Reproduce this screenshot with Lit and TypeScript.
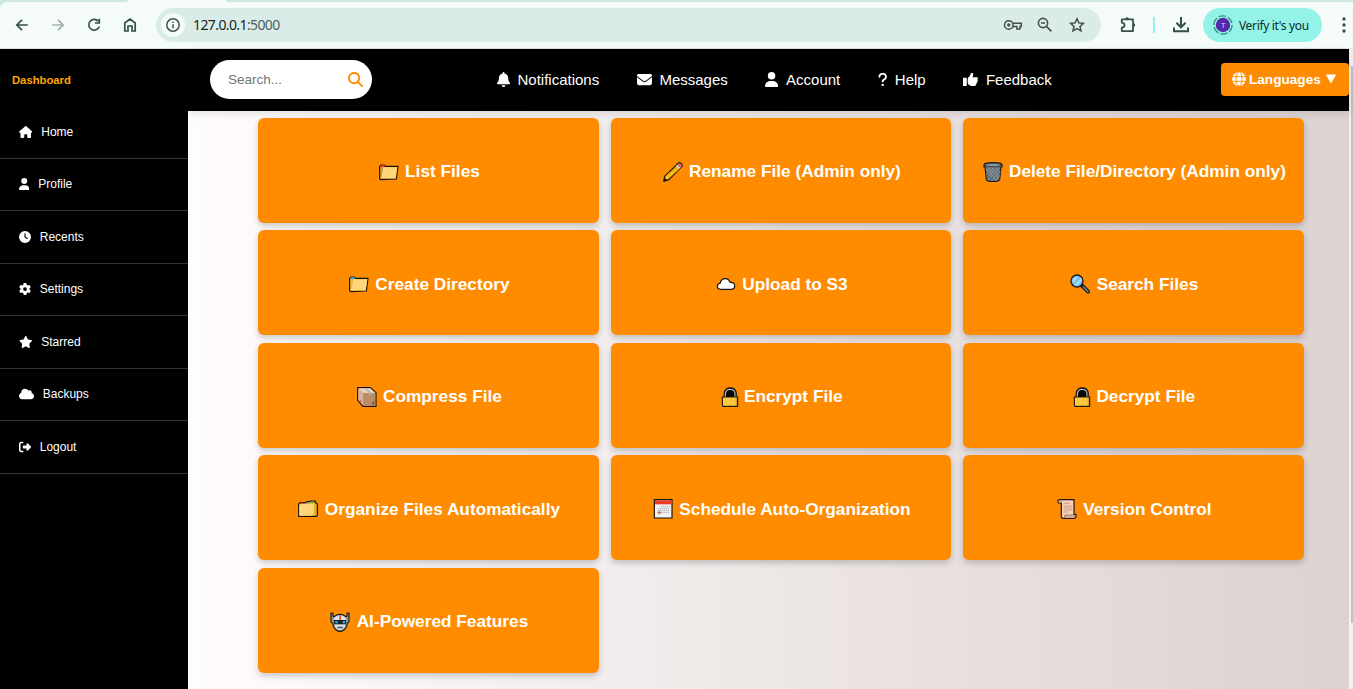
import { LitElement, html, svg, css, TemplateResult, SVGTemplateResult } from "lit";
import { customElement, property } from "lit/decorators.js";

interface Glyph {
  w: number;
  d: string;
}

const GLYPHS: Record<string, Glyph> = {
  home: { w: 576, d: "M575.8 255.5c0 18-15 32.1-32 32.1h-32l.7 160.2c0 2.7-.2 5.4-.5 8.1V472c0 22.1-17.9 40-40 40H456c-1.1 0-2.2 0-3.3-.1c-1.4 .1-2.8 .1-4.2 .1H416 392c-22.1 0-40-17.9-40-40V448 384c0-17.7-14.3-32-32-32H256c-17.7 0-32 14.3-32 32v64 24c0 22.1-17.9 40-40 40H160 128.1c-1.5 0-3-.1-4.5-.2c-1.2 .1-2.4 .2-3.6 .2H104c-22.1 0-40-17.9-40-40V360c0-.9 0-1.9 .1-2.8V287.6H32c-18 0-32-14-32-32.1c0-9 3-17 10-24L266.4 8c7-7 15-8 22-8s15 2 21 7L564.8 231.5c8 7 12 15 11 24z" },
  user: { w: 448, d: "M224 256A128 128 0 1 0 224 0a128 128 0 1 0 0 256zm-45.7 48C79.8 304 0 383.8 0 482.3C0 498.7 13.3 512 29.7 512H418.3c16.4 0 29.7-13.3 29.7-29.7C448 383.8 368.2 304 269.7 304H178.3z" },
  clock: { w: 512, d: "M256 0a256 256 0 1 1 0 512A256 256 0 1 1 256 0zM232 120V256c0 8 4 15.5 10.7 20l96 64c11 7.4 25.9 4.4 33.3-6.7s4.4-25.9-6.7-33.3L280 243.2V120c0-13.3-10.7-24-24-24s-24 10.7-24 24z" },
  gear: { w: 512, d: "M495.9 166.6c3.2 8.7 .5 18.4-6.4 24.6l-43.3 39.4c1.1 8.3 1.7 16.8 1.7 25.4s-.6 17.1-1.7 25.4l43.3 39.4c6.9 6.2 9.6 15.9 6.4 24.6c-4.4 11.9-9.7 23.3-15.8 34.3l-4.7 8.1c-6.6 11-14 21.4-22.1 31.2c-5.9 7.2-15.7 9.6-24.5 6.8l-55.7-17.7c-13.4 10.3-28.2 18.9-44 25.4l-12.5 57.1c-2 9.1-9 16.3-18.2 17.8c-13.8 2.3-28 3.5-42.5 3.5s-28.7-1.2-42.5-3.5c-9.2-1.5-16.2-8.7-18.2-17.8l-12.5-57.1c-15.8-6.5-30.6-15.1-44-25.4L83.1 425.9c-8.8 2.8-18.6 .3-24.5-6.8c-8.1-9.8-15.5-20.2-22.1-31.2l-4.7-8.1c-6.1-11-11.4-22.4-15.8-34.3c-3.2-8.7-.5-18.4 6.4-24.6l43.3-39.4C64.6 273.1 64 264.6 64 256s.6-17.1 1.7-25.4L22.4 191.2c-6.9-6.2-9.6-15.9-6.4-24.6c4.4-11.9 9.7-23.3 15.8-34.3l4.7-8.1c6.6-11 14-21.4 22.1-31.2c5.9-7.2 15.7-9.6 24.5-6.8l55.7 17.7c13.4-10.3 28.2-18.9 44-25.4l12.5-57.1c2-9.1 9-16.3 18.2-17.8C227.3 1.2 241.5 0 256 0s28.7 1.2 42.5 3.5c9.2 1.5 16.2 8.7 18.2 17.8l12.5 57.1c15.8 6.5 30.6 15.1 44 25.4l55.7-17.7c8.8-2.8 18.6-.3 24.5 6.8c8.1 9.8 15.5 20.2 22.1 31.2l4.7 8.1c6.1 11 11.4 22.4 15.8 34.3zM256 336a80 80 0 1 0 0-160 80 80 0 1 0 0 160z" },
  star: { w: 576, d: "M316.9 18C311.6 7 300.4 0 288.1 0s-23.4 7-28.8 18L195 150.3 51.4 171.5c-12 1.8-22 10.2-25.7 21.7s-.7 24.2 7.9 32.7L137.8 329 113.2 474.7c-2 12 3 24.2 12.9 31.3s23 8 33.8 2.3l128.3-68.5 128.3 68.5c10.8 5.7 23.9 4.9 33.8-2.3s14.9-19.3 12.9-31.3L438.5 329 542.7 225.9c8.6-8.5 11.7-21.2 7.9-32.7s-13.7-19.9-25.7-21.7L381.2 150.3 316.9 18z" },
  cloud: { w: 640, d: "M0 336c0 79.5 64.5 144 144 144H512c70.7 0 128-57.3 128-128c0-61.9-44-113.6-102.4-125.4c4.1-10.7 6.4-22.4 6.4-34.6c0-53-43-96-96-96c-19.7 0-38.1 6-53.3 16.2C367 64.2 315.3 32 256 32C167.6 32 96 103.6 96 192c0 2.7 .1 5.4 .2 8.1C40.2 219.8 0 273.2 0 336z" },
  logout: { w: 512, d: "M377.9 105.9L500.7 228.7c7.2 7.2 11.3 17.1 11.3 27.3s-4.1 20.1-11.3 27.3L377.9 406.1c-6.4 6.4-15 9.9-24 9.9c-18.7 0-33.9-15.2-33.9-33.9l0-62.1-128 0c-17.7 0-32-14.3-32-32l0-64c0-17.7 14.3-32 32-32l128 0 0-62.1c0-18.7 15.2-33.9 33.9-33.9c9 0 17.6 3.6 24 9.9zM160 96L96 96c-17.7 0-32 14.3-32 32l0 256c0 17.7 14.3 32 32 32l64 0c17.7 0 32 14.3 32 32s-14.3 32-32 32l-64 0c-53 0-96-43-96-96L0 128C0 75 43 32 96 32l64 0c17.7 0 32 14.3 32 32s-14.3 32-32 32z" },
  bell: { w: 448, d: "M224 0c-17.7 0-32 14.3-32 32V51.2C119 66 64 130.6 64 208v18.8c0 47-17.3 92.4-48.5 127.6l-7.4 8.3c-8.4 9.4-10.4 22.9-5.3 34.4S19.4 416 32 416H416c12.6 0 24-7.4 29.2-18.9s3.1-25-5.3-34.4l-7.4-8.3C401.3 319.2 384 273.9 384 226.8V208c0-77.4-55-142-128-156.8V32c0-17.7-14.3-32-32-32zm45.3 493.3c12-12 18.7-28.3 18.7-45.3H224 160c0 17 6.7 33.3 18.7 45.3s28.3 18.7 45.3 18.7s33.3-6.7 45.3-18.7z" },
  envelope: { w: 512, d: "M48 64C21.5 64 0 85.5 0 112c0 15.1 7.1 29.3 19.2 38.4L236.8 313.6c11.4 8.5 27 8.5 38.4 0L492.8 150.4c12.1-9.1 19.2-23.3 19.2-38.4c0-26.5-21.5-48-48-48H48zM0 176V384c0 35.3 28.7 64 64 64H448c35.3 0 64-28.7 64-64V176L294.4 339.2c-22.8 17.1-54 17.1-76.8 0L0 176z" },
  question: { w: 320, d: "M80 160c0-35.3 28.7-64 64-64h32c35.3 0 64 28.7 64 64v3.6c0 21.8-11.1 42.1-29.4 53.8l-42.2 27.1c-25.2 16.2-40.4 44.1-40.4 74V320c0 17.7 14.3 32 32 32s32-14.3 32-32v-1.4c0-8.2 4.2-15.8 11-20.2l42.2-27.1c36.6-23.6 58.8-64.1 58.8-107.7V160c0-70.7-57.3-128-128-128H144C73.3 32 16 89.3 16 160c0 17.7 14.3 32 32 32s32-14.3 32-32zm80 320a40 40 0 1 0 0-80 40 40 0 1 0 0 80z" },
  thumb: { w: 512, d: "M313.4 32.9c26 5.2 42.9 30.5 37.7 56.5l-2.3 11.4c-5.3 26.7-15.1 52.1-28.8 75.2H464c26.5 0 48 21.5 48 48c0 18.5-10.5 34.6-25.9 42.6C497 275.4 504 288.9 504 304c0 23.4-16.8 42.9-38.9 47.1c4.4 7.3 6.9 15.8 6.9 24.9c0 21.3-13.9 39.4-33.1 45.6c.7 3.3 1.1 6.8 1.1 10.4c0 26.5-21.5 48-48 48H294.5c-19 0-37.5-5.6-53.3-16.1l-38.5-25.7C176 420.4 160 390.4 160 358.3V320 272 247.1c0-29.2 13.3-56.7 36-75l7.4-5.9c26.5-21.2 44.6-51 51.2-84.2l2.3-11.4c5.2-26 30.5-42.9 56.5-37.7zM32 192H96c17.7 0 32 14.3 32 32V448c0 17.7-14.3 32-32 32H32c-17.7 0-32-14.3-32-32V224c0-17.7 14.3-32 32-32z" },
  search: { w: 512, d: "M416 208c0 45.9-14.9 88.3-40 122.7L502.6 457.4c12.5 12.5 12.5 32.8 0 45.3s-32.8 12.5-45.3 0L330.7 376c-34.4 25.2-76.8 40-122.7 40C93.1 416 0 322.9 0 208S93.1 0 208 0S416 93.1 416 208zM208 352a144 144 0 1 0 0-288 144 144 0 1 0 0 288z" },
};

const glyph = (name: string, size: number): TemplateResult => {
  const g = GLYPHS[name];
  return html`<svg class="glyph" width=${(g.w / 512) * size} height=${size} viewBox="0 0 ${g.w} 512" fill="currentColor"><path d=${g.d}></path></svg>`;
};

/* Pictograms, each drawn on a 60 x 60 grid with a dark outline. */
const PICTOS: Record<string, SVGTemplateResult> = {
  folderRed: svg`<path d="M2 13l4-4h10l3 4h38l-5 38-47 2-3-3z" fill="#e0a63c" stroke="#1a1206" stroke-width="3.5"/><path d="M4 12l3-3h8l3 4v3H4z" fill="#e8383d"/><path d="M13 16h42l-5 33H6z" fill="#ffd679"/><path d="M11 18L5 48" stroke="#b98225" stroke-width="2"/>`,
  folderBlue: svg`<path d="M2 13l4-4h10l3 4h38l-5 38-47 2-3-3z" fill="#ffc83d" stroke="#1a1206" stroke-width="3.5"/><path d="M4 12l3-3h8l3 4v3H4z" fill="#3a96dd"/><path d="M13 16h42l-5 33H6z" fill="#ffd679"/><path d="M11 18L5 48" stroke="#e0a63c" stroke-width="2"/>`,
  pencil: svg`<path d="M2 58l3-15L45 4q4-4 9 0t3 9L18 53z" fill="#ffc20e" stroke="#17120b" stroke-width="3.5" stroke-linejoin="round"/><path d="M44 8q5-6 10-1t0 9l-3 3-9-9z" fill="#e8566b"/><path d="M38 13l10 9 4-5-9-9z" fill="#c9d0d3"/><path d="M9 42l34-28M16 50l33-30" stroke="#d99200" stroke-width="3"/><path d="M3 57l2-10 8 7z" fill="#17120b"/>`,
  trash: svg`<path d="M3 8q2-6 27-6t27 6v7h-3l-4 38q-3 6-20 6T10 53L6 15H3z" fill="#5f6b70" stroke="#171b1d" stroke-width="3.5"/><ellipse cx="30" cy="9" rx="24" ry="5" fill="#87979e" stroke="#252a2c" stroke-width="2"/><path d="M9 19l32 36M16 18l33 31M25 17l26 25M38 17l14 14M50 18L15 54M42 18L12 47M33 18L10 38M22 17L9 28M52 28L26 56M50 42L38 56" stroke="#a4b1b6" stroke-width="1.8"/>`,
  cloud: svg`<path d="M15 46Q4 46 4 37q0-8 9-10 2-13 15-13 10 0 14 11 14-1 14 11 0 10-11 10z" fill="#fff" stroke="#17120b" stroke-width="3.5"/><path d="M13 43h34" stroke="#c9d7df" stroke-width="2"/>`,
  lens: svg`<path d="M36 35l18 18" stroke="#171717" stroke-width="12" stroke-linecap="round"/><path d="M40 39l14 14" stroke="#74858c" stroke-width="5" stroke-linecap="round"/><circle cx="21" cy="21" r="18" fill="#7cc0f1" stroke="#1a1f24" stroke-width="4"/><path d="M8 19Q12 7 24 8L9 27zM14 33L34 12l1 8-15 15z" fill="#b5def9"/>`,
  box: svg`<path d="M2 2h38l17 15v41H18L2 40z" fill="#c09974" stroke="#17120b" stroke-width="3.5"/><path d="M4 4h35l16 14H18z" fill="#ead0bb"/><path d="M4 5l14 14v36L4 39z" fill="#d9b596"/><path d="M22 4h6l15 14v7h-7v-7z" fill="#a9b8bd"/><path d="M18 19h37v37H18z" fill="#b98e66"/><path d="M36 18h7v5h-7z" fill="#aab0ab"/><path d="M8 37l5 5v5l-5-5z" fill="#e83d35"/><path d="M45 50l6-7v7zM44 52h7" fill="#66452d" stroke="#66452d"/>`,
  lock: svg`<path d="M9 31V22Q9 2 28 2t18 20v9" fill="#080808" stroke="#111" stroke-width="3"/><path d="M13 31V23Q13 7 28 7t14 16v8" fill="#080808" stroke="#b4c0c6" stroke-width="3.5"/><path d="M4 30h46v28H7q-3 0-3-4z" fill="#ffc83d" stroke="#241d0b" stroke-width="3.5"/><path d="M44 32h4v24h-4z" fill="#d99c1f"/>`,
  dividers: svg`<path d="M2 16l4-5h18l3-3h8l3-2h14v5l6 4v34q0 3-5 3H2z" fill="#f2b932" stroke="#17120b" stroke-width="3.5"/><path d="M8 11h12v3H8z" fill="#e8383d"/><path d="M25 10h10v3H25z" fill="#3a96dd"/><path d="M39 8h12v3H39z" fill="#19a44b"/><path d="M4 18l4-3h39v30l-5 5H4z" fill="#ffd679"/><path d="M51 14v33" stroke="#d99b18" stroke-width="2"/>`,
  calendar: svg`<path d="M4 2h53v55H4z" fill="#f1f3f4" stroke="#17120b" stroke-width="3.5"/><path d="M6 4h49v12H6z" fill="#ee3d25"/><path d="M24 23h26M14 29h36M14 35h36M14 41h36" stroke="#a8afb2" stroke-width="3" stroke-dasharray="4 2"/><path d="M13 41h12M19 35v12" stroke="#f05b4c" stroke-width="3"/>`,
  scroll: svg`<path d="M3 4q2-2 6-2h42v44h6q2 12-8 12H19q-7 0-6-9V12H5Q2 10 3 4z" fill="#f5d2bc" stroke="#241407" stroke-width="3.5"/><path d="M4 5h12v5H6zM24 50h31q-1 6-6 6H21z" fill="#d6a88e"/><path d="M20 13h19M20 21h27M20 27h24M20 33h25M20 39h14" stroke="#c89175" stroke-width="2.5"/><path d="M20 57q5-2 4-9h31" fill="none" stroke="#66452f" stroke-width="2"/>`,
  robot: svg`<path d="M3 3h6v10h5Q20 7 30 7t16 6h5V3h6v25q0 4-5 6-2 12-8 18-6 6-14 6t-14-6Q10 46 8 34q-5-2-5-6z" fill="#8d999e" stroke="#17191a" stroke-width="3.5" stroke-linejoin="round"/><path d="M13 19Q17 10 30 10t17 9v19Q43 53 30 54 17 53 13 38z" fill="#dfe4e6"/><path d="M28 10h5v14h-5z" fill="#e8492f"/><path d="M12 24h36v13H12z" fill="#1d2428"/><path d="M16 28h7v6h-7zM38 28h7v6h-7z" fill="#35c2ee"/><path d="M22 44h17v5H22z" fill="#566268"/>`,
};

@customElement("browser-bar")
export class BrowserBar extends LitElement {
  static styles = css`
    :host { display: block; height: 49px; box-sizing: border-box; background: #cce8e1; }
    .tabs { display: flex; height: 2px; }
    .tab { width: 100px; margin-left: 127px; border-radius: 3px 3px 0 0; background: #f4fbf9; }
    .bar { display: flex; align-items: center; height: 47px; box-sizing: border-box; padding-left: 4px; background: #f4fbf9; border-bottom: 1px solid #d5e4e1; border-radius: 7px 0 0 0; }
    .btn { display: flex; justify-content: center; width: 36px; color: #34504b; }
    .btn.dim { color: #a3b0ae; }
    .omnibox { display: flex; align-items: center; box-sizing: border-box; width: 945px; height: 34px; margin-left: 8px; padding: 0 12px 0 5px; border-radius: 17px; background: #daece8; color: #454f4d; }
    .info { display: flex; align-items: center; justify-content: center; width: 24px; height: 24px; border-radius: 50%; background: #f4fbf9; }
    .url { flex: 1; margin-left: 8px; font: 14px/20px "Noto Sans", sans-serif; letter-spacing: -0.6px; color: #172522; padding-bottom: 1px; }
    .port { color: #50605d; }
    .tool { display: flex; justify-content: center; width: 32px; }
    .tools { display: flex; margin-right: -4px; }
    .ext { display: flex; margin-left: 17px; color: #34504b; }
    .sep { width: 2px; height: 16px; margin: 0 17px 0 15px; background: #92f3e6; }
    .down { display: flex; color: #34504b; }
    .profile { display: flex; align-items: center; box-sizing: border-box; width: 119px; height: 34px; margin-left: 13px; padding-left: 10px; gap: 6px; border-radius: 17px; background: #92f3e6; font: 12px "Noto Sans", sans-serif; letter-spacing: -0.34px; color: #0b2f2a; white-space: nowrap; }
    .initial { font: 8px "Liberation Sans", sans-serif; }
    .menu { display: flex; margin-left: 20px; color: #34504b; }
    svg { display: block; flex: none; }
  `;

  render() {
    const line = (body: SVGTemplateResult, w = 20, sw = 1.7) =>
      html`<svg width=${w} height="20" viewBox="0 0 ${w} 20" fill="none" stroke="currentColor" stroke-width=${sw}>${body}</svg>`;
    return html`
      <div class="tabs"><div class="tab"></div></div>
      <div class="bar">
        <div class="btn">${line(svg`<path d="M15.8 10H5.2M10 4.8L4.8 10l5.2 5.2"/>`)}</div>
        <div class="btn dim">${line(svg`<path d="M4.2 10h10.6M10 4.8l5.2 5.2-5.2 5.2"/>`)}</div>
        <div class="btn">${line(svg`<path d="M14.2 6.2A5.4 5.4 0 1 0 15.3 11.5M15.3 3.8V8H11"/>`)}</div>
        <div class="btn">${line(svg`<path d="M4.8 16V8L10 4l5.2 4v8H12v-5H8v5z"/>`)}</div>
        <div class="omnibox">
          <div class="info">${line(svg`<circle cx="10" cy="10" r="6.2"/><path d="M10 9.3V13.3M10 6.5v1.6"/>`, 20, 1.5)}</div>
          <div class="url">127.0.0.1<span class="port">:5000</span></div>
          <div class="tools">
            <div class="tool">${line(svg`<circle cx="5.8" cy="10" r="4.3"/><circle cx="5.8" cy="10" r="1.7" fill="currentColor" stroke="none"/><path d="M10 8.2h8.3v3.4H17V14h-3.2v-2.4H10"/>`, 20, 1.5)}</div>
            <div class="tool">${line(svg`<circle cx="8" cy="8" r="4.6"/><path d="M11.4 11.4l5 5M6 8h4"/>`, 20, 1.6)}</div>
            <div class="tool">${line(svg`<path d="M10 3.8l1.9 4.1 4.5.5-3.4 3 1 4.4-4-2.3-4 2.3 1-4.4-3.4-3 4.5-.5z"/>`, 20, 1.5)}</div>
          </div>
        </div>
        <div class="ext">${line(svg`<path d="M3.8 4.3H15v11.8H3.8v-3.4q2.7-.4 2.7-2.5T3.8 7.7z" stroke-linejoin="round"/><path d="M7.4 4a1.8 1.8 0 0 1 3.6 0zM15.3 8.1a1.8 1.8 0 0 1 0 3.7z" fill="currentColor" stroke="none"/>`, 20, 1.8)}</div>
        <div class="sep"></div>
        <div class="down">${line(svg`<path d="M9 2v10M4.4 7.7L9 12.3l4.6-4.6M2 12.5v3.8h14v-3.8"/>`, 18, 2)}</div>
        <div class="profile">
          <svg width="20" height="20" viewBox="0 0 20 20"><circle cx="10" cy="10" r="9.1" fill="none" stroke="#3d8f88" stroke-width="1.3" stroke-dasharray="7.5 2" /><circle cx="10" cy="10" r="7.2" fill="#5429ae"/><text class="initial" x="10" y="13" text-anchor="middle" fill="#d8cdf5">T</text></svg>
          <span>Verify it's you</span>
        </div>
        <div class="menu"><svg width="4" height="18" viewBox="0 0 4 18" fill="currentColor"><circle cx="2" cy="3" r="1.7"/><circle cx="2" cy="9" r="1.7"/><circle cx="2" cy="15" r="1.7"/></svg></div>
      </div>`;
  }
}

@customElement("side-menu")
export class SideMenu extends LitElement {
  static styles = css`
    :host { display: block; box-sizing: border-box; width: 188px; background: #000; color: #fff; font-family: "Liberation Sans", Arial, sans-serif; }
    .brand { height: 57.25px; box-sizing: border-box; padding: 24px 0 0 12px; font-size: 11.25px; line-height: 14px; font-weight: bold; color: #ffa500; }
    .item { display: flex; align-items: center; gap: 9px; height: 52.5px; box-sizing: border-box; padding: 0 0 0.8px 18.75px; border-bottom: 1px solid #333; font-size: 12px; }
    .glyph { display: block; }
  `;
  private items: [string, string][] = [
    ["home", "Home"], ["user", "Profile"], ["clock", "Recents"], ["gear", "Settings"],
    ["star", "Starred"], ["cloud", "Backups"], ["logout", "Logout"],
  ];
  render() {
    return html`<div class="brand">Dashboard</div>
      ${this.items.map(([icon, label]) => html`<div class="item">${glyph(icon, 12)}<span>${label}</span></div>`)}`;
  }
}

@customElement("top-nav")
export class TopNav extends LitElement {
  static styles = css`
    :host { display: flex; align-items: center; height: 62px; box-sizing: border-box; padding: 0 0 1.5px 22px; background: #000; color: #fff; font-family: "Liberation Sans", Arial, sans-serif; box-shadow: 0 3px 7.5px rgba(0, 0, 0, 0.1); position: relative; }
    .search { display: flex; align-items: center; justify-content: space-between; box-sizing: border-box; width: 162px; height: 39px; padding: 0 9px 0 18px; border-radius: 19.5px; background: #fff; font-size: 13.5px; color: #757575; }
    .go { display: flex; color: #ff8c00; }
    .links { display: flex; flex: 1; gap: 37.5px; margin-left: 124.7px; font-size: 15px; }
    .link { display: flex; align-items: center; gap: 7.7px; }
    .lang { display: flex; align-items: center; box-sizing: border-box; width: 128px; height: 33px; padding-left: 11px; border-radius: 3.75px; background: #ff8c00; font-size: 13.6px; font-weight: bold; }
    .lang .word { margin: 0 4px 0 3px; }
    .glyph { display: block; }
  `;
  private links: [string, string][] = [
    ["bell", "Notifications"], ["envelope", "Messages"], ["user", "Account"], ["question", "Help"], ["thumb", "Feedback"],
  ];
  render() {
    return html`
      <div class="search"><span>Search...</span><span class="go">${glyph("search", 15)}</span></div>
      <div class="links">${this.links.map(([icon, label]) => html`<div class="link">${glyph(icon, 15)}<span>${label}</span></div>`)}</div>
      <div class="lang">
        <svg width="14" height="14" viewBox="0 0 14 14"><circle cx="7" cy="7" r="6.9" fill="#fff"/><g fill="none" stroke="#ff8c00" stroke-width="0.9"><ellipse cx="7" cy="7" rx="3" ry="7.2"/><path d="M0 4.6h14M0 9.4h14"/></g></svg>
        <span class="word">Languages</span>
        <svg width="12" height="10" viewBox="0 0 12 10"><path d="M.8.5h10.4L6 9.6z" fill="#fff"/></svg>
      </div>`;
  }
}

@customElement("action-card")
export class ActionCard extends LitElement {
  static styles = css`
    :host { display: flex; align-items: center; justify-content: center; box-sizing: border-box; padding-top: 2.8px; border-radius: 6px; background: #ff8c00; color: #fff; font: bold 17.25px "Liberation Sans", Arial, sans-serif; white-space: nowrap; box-shadow: 0 3px 6px rgba(0, 0, 0, 0.2); }
    .picto { display: block; margin: 0 6.4px 0 2px; }
    .picto.lock { margin-right: 3px; }
  `;
  @property() picto = "";
  @property() label = "";
  render() {
    return html`<svg class="picto ${this.picto}" width="20" height="20" viewBox="0 0 60 60">${PICTOS[this.picto]}</svg><span>${this.label}</span>`;
  }
}

@customElement("app-root")
export class AppRoot extends LitElement {
  static styles = css`
    :host { display: flex; flex-direction: column; height: 100vh; overflow: hidden; }
    .page { display: flex; flex: 1; min-height: 0; }
    .content { display: flex; flex: 1; flex-direction: column; min-width: 0; background: linear-gradient(to right, #fffcfd, #dcd2d0); }
    .cards { display: grid; grid-template-columns: repeat(3, 1fr); grid-auto-rows: 105px; gap: 7.5px 12px; padding: 6.75px 45.5px 0 70px; }
    .scroll { width: 4px; box-sizing: border-box; padding: 17px 0 0 2px; background: #f1f1f1; }
    .thumb { height: 557px; background: #c1c1c1; }
  `;
  private cards: [string, string][] = [
    ["folderRed", "List Files"], ["pencil", "Rename File (Admin only)"], ["trash", "Delete File/Directory (Admin only)"],
    ["folderBlue", "Create Directory"], ["cloud", "Upload to S3"], ["lens", "Search Files"],
    ["box", "Compress File"], ["lock", "Encrypt File"], ["lock", "Decrypt File"],
    ["dividers", "Organize Files Automatically"], ["calendar", "Schedule Auto-Organization"], ["scroll", "Version Control"],
    ["robot", "AI-Powered Features"],
  ];
  render() {
    return html`
      <browser-bar></browser-bar>
      <div class="page">
        <side-menu></side-menu>
        <div class="content">
          <top-nav></top-nav>
          <div class="cards">${this.cards.map(([p, l]) => html`<action-card .picto=${p} .label=${l}></action-card>`)}</div>
        </div>
        <div class="scroll"><div class="thumb"></div></div>
      </div>`;
  }
}
